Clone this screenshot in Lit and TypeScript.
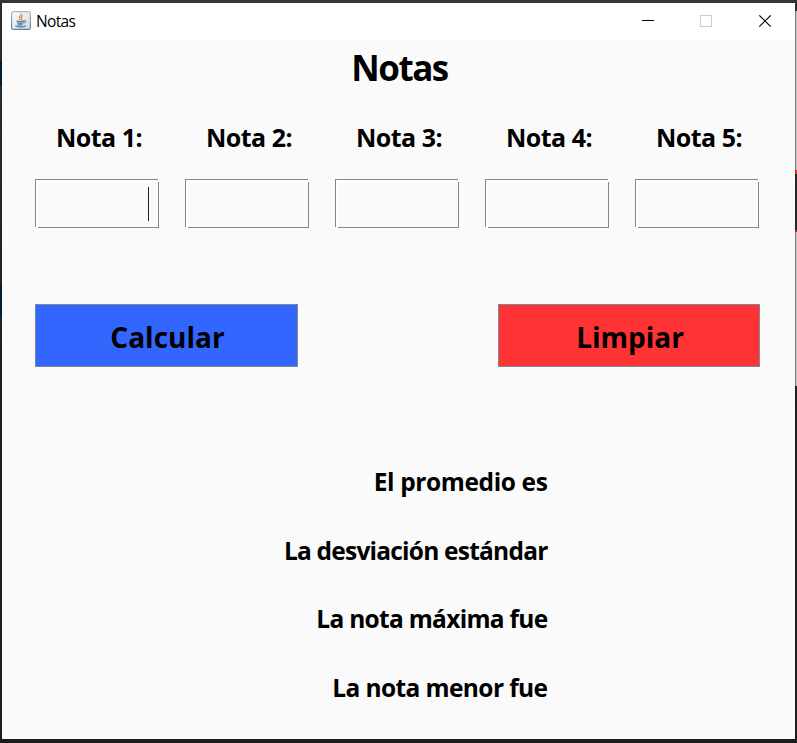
import { LitElement, html, css, svg } from "lit";
import { customElement, property } from "lit/decorators.js";

@customElement("java-icon")
class JavaIcon extends LitElement {
  static styles = css`
    :host { display: block; width: 20px; height: 19px; }
    svg { display: block; }
  `;
  render() {
    return html`<svg width="20" height="19" viewBox="0 0 20 19" fill="none">
      <defs>
        <linearGradient id="face" x1="0" y1="0" x2="1" y2="1">
          <stop offset="0" stop-color="#fff" /><stop offset="1" stop-color="#d3d9dd" />
        </linearGradient>
        <linearGradient id="edge" x1="0" y1="0" x2="0" y2="1">
          <stop offset="0" stop-color="#a5bccb" /><stop offset="1" stop-color="#5d7f98" />
        </linearGradient>
      </defs>
      <rect x="0.6" y="0.6" width="18.8" height="17.8" rx="1.8" fill="url(#face)" stroke="url(#edge)" stroke-width="1.2" />
      ${svg`<path d="M10.3 2.3c1.1 1.7-2.5 2.8-2 4.4.2.8 1 1.3 1.2 2.1M12 4.5c-1.7.9-2.2 1.6-1.3 2.6.5.7.2 1.2-.5 1.8" stroke="#ef9042" stroke-width="1.3" />
      <path d="M5.6 9.8c1.8.7 5.8.7 7.8 0M6 11.7c1.7.8 4.8.8 6.7 0M6.7 13.5c1.5.6 3.5.6 5 0M4.2 14.7c2.8 1.6 8.5 1.6 10.8 0" stroke="#527f9e" stroke-width="1.3" />
      <path d="M13.2 9.7c2.4-.7 2.3 1.8-.2 2.4" stroke="#527f9e" />`}
    </svg>`;
  }
}

@customElement("title-bar")
class TitleBar extends LitElement {
  @property() caption = "";
  static styles = css`
    :host { display: flex; height: 37px; background: #fff; box-sizing: border-box; padding-left: 9px; }
    java-icon { margin-top: 8px; }
    .caption { margin-left: 5px; font: 15.5px/37px "Open Sans", sans-serif; letter-spacing: -0.65px; color: #000; flex: 1; }
    .controls { display: flex; margin-right: -1px; }
    .control { width: 58px; height: 37px; display: block; }
  `;
  render() {
    return html`<java-icon></java-icon>
      <div class="caption">${this.caption}</div>
      <div class="controls">
        <svg class="control" viewBox="0 0 58 37"><path d="M20 17.5h12" stroke="#000" /></svg>
        <svg class="control" viewBox="0 0 58 37"><rect x="20.5" y="12.5" width="11" height="11" fill="none" stroke="#ccc" /></svg>
        <svg class="control" viewBox="0 0 58 37"><path d="M21.3 12.3l11.4 11.4M32.7 12.3L21.3 23.7" stroke="#000" stroke-width="1.2" /></svg>
      </div>`;
  }
}

@customElement("text-field")
class TextField extends LitElement {
  @property({ type: Boolean }) active = false;
  static styles = css`
    :host {
      display: flex; justify-content: flex-end; box-sizing: border-box;
      width: 124px; height: 49px; padding: 8px 10px 7px 0;
      background:
        linear-gradient(#7a8a99, #7a8a99) 0 0 / 123px 1px,
        linear-gradient(#7a8a99, #7a8a99) 0 0 / 1px 48px,
        linear-gradient(#7a8a99, #7a8a99) 123px 3px / 1px 46px,
        linear-gradient(#7a8a99, #7a8a99) 3px 48px / 121px 1px,
        linear-gradient(#fff, #fff) 1px 1px / 123px 2px,
        linear-gradient(#fff, #fff) 1px 1px / 2px 48px;
      background-repeat: no-repeat;
    }
    .caret { width: 1px; height: 34px; background: #222; }
  `;
  render() {
    return this.active ? html`<div class="caret"></div>` : html``;
  }
}

@customElement("app-root")
class AppRoot extends LitElement {
  static styles = css`
    :host {
      display: block; box-sizing: border-box; width: 797px; height: 743px; padding: 3px 2px 4px 2px; overflow: hidden;
      font-family: "Open Sans", sans-serif; font-weight: 700; color: #000;
      background:
        linear-gradient(#7c7c7c, #7c7c7c) 795px 11px / 1px 159px,
        linear-gradient(#c8c8c8, #c8c8c8) 796px 11px / 1px 159px,
        linear-gradient(#c33, #c33) 795px 170px / 2px 4px,
        linear-gradient(#933, #933) 795px 230px / 2px 2px,
        linear-gradient(#7c7c7c, #7c7c7c) 795px 232px / 1px 154px,
        linear-gradient(#c8c8c8, #c8c8c8) 796px 232px / 1px 154px,
        linear-gradient(#001c3c, #001c3c) 0 61px / 2px 25px,
        linear-gradient(#001c3c, #001c3c) 0 286px / 2px 29px,
        linear-gradient(#333638, #333638) 0 0 / 797px 3px,
        linear-gradient(#2b2e30, #1c1c1e 60%, #1c1c1e);
      background-repeat: no-repeat;
    }
    .window { width: 793px; height: 736px; background: #fafafa; overflow: hidden; }
    .heading { font-size: 35px; letter-spacing: -1.5px; line-height: 56px; height: 54px; text-align: center; padding-left: 2px; white-space: nowrap; }
    .grid { display: grid; grid-template-columns: repeat(5, 124px); column-gap: 26px; margin-left: 33px; }
    .labels { margin-top: 30px; }
    .label { font-size: 25px; letter-spacing: -0.5px; line-height: 27px; height: 27px; text-align: center; padding-left: 4px; white-space: nowrap; }
    .fields { margin-top: 28px; }
    .actions { display: flex; justify-content: space-between; margin: 76px 35px 0 33px; }
    .button {
      box-sizing: border-box; width: 263px; height: 63px; padding: 4px 0 0 2px; border: 1px solid #7a8a99; border-radius: 0;
      font: 700 28px/57px "Open Sans", sans-serif; color: #000; text-align: center;
    }
    .calculate { background: #3366ff; }
    .clear { background: #ff3333; width: 262px; }
    .results { margin-top: 80px; width: 545.5px; display: grid; grid-template-rows: 69px 69px 68px 69px; align-items: center; text-align: right; font-size: 24.5px; line-height: 34px; letter-spacing: -0.7px; white-space: nowrap; }
    .result:first-child { letter-spacing: -0.38px; }
    .result:nth-child(2) { letter-spacing: -0.78px; }
    .result:last-child { letter-spacing: -0.6px; }
  `;
  render() {
    const notes = [1, 2, 3, 4, 5];
    const results = ["El promedio es", "La desviación estándar", "La nota máxima fue", "La nota menor fue"];
    return html`<div class="window">
      <title-bar caption="Notas"></title-bar>
      <div class="heading">Notas</div>
      <div class="grid labels">${notes.map((n) => html`<div class="label">Nota ${n}:</div>`)}</div>
      <div class="grid fields">${notes.map((n) => html`<text-field ?active=${n === 1}></text-field>`)}</div>
      <div class="actions">
        <button class="button calculate">Calcular</button>
        <button class="button clear">Limpiar</button>
      </div>
      <div class="results">${results.map((r) => html`<div class="result">${r}</div>`)}</div>
    </div>`;
  }
}
